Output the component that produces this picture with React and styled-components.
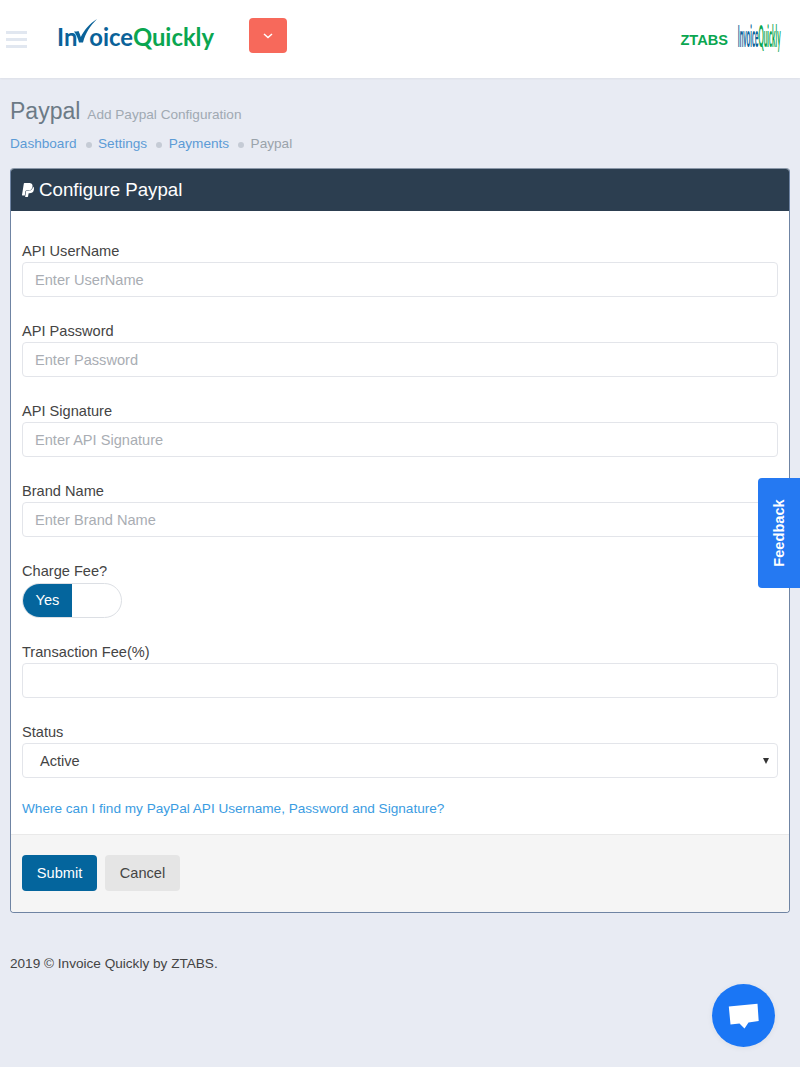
import React from 'react';
import styled, { createGlobalStyle } from 'styled-components';
import { FaPaypal } from 'react-icons/fa';

const GlobalStyle = createGlobalStyle`
  html, body {
    margin: 0;
    padding: 0;
    background: #e8ebf3;
    font-family: "Liberation Sans", Arial, sans-serif;
    color: #333;
  }
  * { box-sizing: border-box; }
`;

const Page = styled.div`
  width: 800px;
  height: 1067px;
  overflow: hidden;
`;

const TopBar = styled.header`
  height: 78px;
  background: #fff;
  display: flex;
  align-items: center;
  padding: 0 20px 0 6px;
  box-shadow: 0 1px 2px rgba(0, 0, 0, 0.05);
`;

const Burger = styled.div`
  width: 21px;
  display: flex;
  flex-direction: column;
  gap: 4px;
  span {
    display: block;
    height: 3px;
    background: #e1e7f0;
  }
`;

const Logo = styled.div`
  margin-left: 30px;
  width: 192px;
  height: 30px;
  margin-bottom: 4px;
  position: relative;
  font-family: Lato, sans-serif;
  font-weight: 700;
  font-size: 23.8px;
  line-height: 30px;
  white-space: nowrap;
`;

const Blue = styled.span`
  color: #0a6299;
`;

const Green = styled.span`
  color: #0aa650;
`;

const Tick = styled.svg`
  position: absolute;
  left: 16px;
  top: -4px;
`;

const HiddenV = styled.span`
  visibility: hidden;
`;

const DropButton = styled.button`
  width: 38px;
  height: 35px;
  border: 0;
  border-radius: 4px;
  background: #f7695b;
  color: #fff;
  display: flex;
  align-items: center;
  justify-content: center;
  padding: 0;
  margin-bottom: 7px;
`;

const BarRight = styled.div`
  margin-left: auto;
  display: flex;
  align-items: center;
  gap: 10px;
`;

const Ztabs = styled.span`
  font-weight: 700;
  font-size: 14.6px;
  color: #0aa650;
  margin-top: 2px;
`;

const SquishLogo = styled.div`
  width: 42px;
  height: 30px;
  display: flex;
  align-items: center;
  justify-content: center;
  margin-bottom: 7px;
  span.inner {
    display: block;
    font-family: Lato, sans-serif;
    font-size: 24px;
    font-weight: 700;
    white-space: nowrap;
    transform: scaleX(0.27) scaleY(1.25);
  }
`;

const Content = styled.main`
  padding: 19px 10px 0;
`;

const TitleRow = styled.div`
  display: flex;
  align-items: baseline;
  gap: 7px;
  height: 28px;
`;

const Title = styled.h1`
  margin: 0;
  font-size: 23px;
  line-height: 28px;
  font-weight: 400;
  color: #6c7a86;
`;

const Subtitle = styled.small`
  font-size: 13.6px;
  color: #a0a9b2;
`;

const Crumbs = styled.nav`
  margin-top: 8px;
  height: 20px;
  display: flex;
  align-items: center;
  font-size: 13.6px;
`;

const Crumb = styled.span`
  color: ${p => (p.$current ? '#9aa3ab' : '#5c9bd6')};
  &:not(:last-child)::after {
    content: "";
    display: inline-block;
    width: 6px;
    height: 6px;
    border-radius: 50%;
    background: #c5cbd5;
    margin: 0 6.500px 0 9px;
    vertical-align: 0;
  }
`;

const Card = styled.section`
  margin-top: 15px;
  height: 745px;
  display: flex;
  flex-direction: column;
  background: #fff;
  border: 1px solid #6f84a3;
  border-top-color: #8a97a8;
  border-radius: 4px;
  overflow: hidden;
`;

const CardHead = styled.div`
  height: 42px;
  flex: none;
  background: #2c3e50;
  color: #fff;
  display: flex;
  align-items: center;
  padding: 0 11px;
  gap: 3px;
  font-size: 18.7px;
`;

const HeadIcon = styled(FaPaypal)`
  margin-left: -2px;
  font-size: 16px;
`;

const CardBody = styled.div`
  flex: none;
  height: 623px;
  padding: 30px 11px 0;
  display: flex;
  flex-direction: column;
  gap: 24.1px;
`;

const Field = styled.div`
  display: flex;
  flex-direction: column;
`;

const Label = styled.label`
  font-size: 14.6px;
  line-height: 20px;
  height: 21px;
  color: #444;
`;

const Input = styled.input`
  height: 35px;
  width: 100%;
  border: 1px solid #e3e5ea;
  border-radius: 4px;
  padding: 0 12px;
  font: 14.6px "Liberation Sans", Arial, sans-serif;
  color: #444;
  background: #fff;
  &::placeholder {
    color: #a9adb3;
    opacity: 1;
  }
`;

const Select = styled.div`
  height: 35px;
  border: 1px solid #e3e5ea;
  border-radius: 4px;
  padding: 0 8px 0 17px;
  font-size: 14.6px;
  color: #444;
  display: flex;
  align-items: center;
  justify-content: space-between;
  &::after {
    content: "";
    width: 0;
    height: 0;
    border-left: 3.5px solid transparent;
    border-right: 3.5px solid transparent;
    border-top: 6px solid #333;
  }
`;

const Toggle = styled.div`
  width: 100px;
  height: 35px;
  border: 1px solid #dcdfe4;
  border-radius: 18px;
  overflow: hidden;
  display: flex;
  margin-top: 0.5px;
`;

const ToggleOn = styled.span`
  width: 49px;
  background: #04659d;
  color: #fff;
  font-size: 14.6px;
  display: flex;
  align-items: center;
  justify-content: center;
`;

const HelpLink = styled.a`
  font-size: 13.6px;
  line-height: 20px;
  color: #3b9ce2;
  margin-top: -3.5px;
`;

const CardFoot = styled.div`
  flex: 1;
  background: #f5f5f5;
  border-top: 1px solid #e9e9e9;
  padding: 20px 11px;
  display: flex;
  align-items: flex-start;
  gap: 8px;
`;

const Button = styled.button`
  width: 75px;
  height: 36px;
  border: 0;
  border-radius: 4px;
  font: 14.6px "Liberation Sans", Arial, sans-serif;
  background: ${p => (p.$primary ? '#04659d' : '#e5e5e5')};
  color: ${p => (p.$primary ? '#fff' : '#444')};
`;

const Footer = styled.footer`
  margin-top: 41px;
  font-size: 13.6px;
  line-height: 20px;
  color: #444;
`;

const Feedback = styled.div`
  position: fixed;
  right: 0;
  top: 478px;
  width: 42px;
  height: 110px;
  background: #2579f2;
  border-radius: 4px 0 0 4px;
  color: #fff;
  font-weight: 700;
  font-size: 14.6px;
  display: flex;
  align-items: center;
  justify-content: center;
  span {
    transform: rotate(-90deg);
    white-space: nowrap;
  }
`;

const ChatBubble = styled.div`
  position: fixed;
  left: 712px;
  top: 984px;
  width: 63px;
  height: 63px;
  border-radius: 50%;
  background: #1a76f5;
  box-shadow: 0 1px 6px rgba(0, 0, 0, 0.06);
  display: flex;
  align-items: center;
  justify-content: center;
`;

const fields = [
  { label: 'API UserName', placeholder: 'Enter UserName' },
  { label: 'API Password', placeholder: 'Enter Password' },
  { label: 'API Signature', placeholder: 'Enter API Signature' },
  { label: 'Brand Name', placeholder: 'Enter Brand Name' },
];

export default function App() {
  return (
    <Page>
      <GlobalStyle />
      <TopBar>
        <Burger><span /><span /><span /></Burger>
        <Logo>
          <Tick width="26" height="26" viewBox="0 0 26 26">
            <path d="M1 13.500 C3 13.500 4.500 13.500 5.500 13 C6.500 15 7.200 17 7.800 19 C11 12.500 16 6 24 1 C17 8 12.500 15 10 24.500 L6 24.500 C5 20.500 3.500 16.500 1 13.500 Z" fill="#0a6299" />
          </Tick>
          <Blue>In<HiddenV>v</HiddenV>oice</Blue><Green>Quickly</Green>
        </Logo>
        <DropButton aria-label="menu">
          <svg width="10" height="6" viewBox="0 0 10 6" fill="none" stroke="#fff" strokeWidth="1.500">
            <path d="M1 1l4 3.500L9 1" />
          </svg>
        </DropButton>
        <BarRight>
          <Ztabs>ZTABS</Ztabs>
          <SquishLogo>
            <span className="inner"><Blue>Invoice</Blue><Green>Quickly</Green></span>
          </SquishLogo>
        </BarRight>
      </TopBar>

      <Content>
        <TitleRow>
          <Title>Paypal</Title>
          <Subtitle>Add Paypal Configuration</Subtitle>
        </TitleRow>
        <Crumbs>
          <Crumb>Dashboard</Crumb>
          <Crumb>Settings</Crumb>
          <Crumb>Payments</Crumb>
          <Crumb $current>Paypal</Crumb>
        </Crumbs>

        <Card>
          <CardHead><HeadIcon /> Configure Paypal</CardHead>
          <CardBody>
            {fields.map(f => (
              <Field key={f.label}>
                <Label>{f.label}</Label>
                <Input placeholder={f.placeholder} />
              </Field>
            ))}
            <Field>
              <Label>Charge Fee?</Label>
              <Toggle><ToggleOn>Yes</ToggleOn></Toggle>
            </Field>
            <Field>
              <Label>Transaction Fee(%)</Label>
              <Input />
            </Field>
            <Field>
              <Label>Status</Label>
              <Select>Active</Select>
            </Field>
            <HelpLink>Where can I find my PayPal API Username, Password and Signature?</HelpLink>
          </CardBody>
          <CardFoot>
            <Button $primary>Submit</Button>
            <Button>Cancel</Button>
          </CardFoot>
        </Card>

        <Footer>2019 © Invoice Quickly by ZTABS.</Footer>
      </Content>

      <Feedback><span>Feedback</span></Feedback>
      <ChatBubble>
        <svg width="32" height="28" viewBox="0 0 32 28" fill="#fff">
          <path d="M0.800 4.500 L29.500 1.800 L30.700 19 L20.500 20.500 L16.500 26.500 L11.500 21.500 L2.500 22.500 Z" />
        </svg>
      </ChatBubble>
    </Page>
  );
}
